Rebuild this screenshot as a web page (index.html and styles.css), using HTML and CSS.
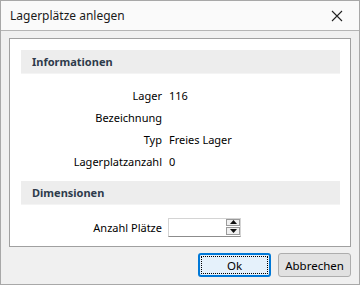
FILE: index.html
```html
<!DOCTYPE html>
<html lang="de">
<head>
    <meta charset="UTF-8">
    <meta name="viewport" content="width=device-width, initial-scale=1.0">
    <title>Lagerplätze anlegen</title>
    <link rel="stylesheet" href="styles.css">
</head>
<body>
    <div class="window">
        <div class="titlebar">
            <span class="title">Lagerplätze anlegen</span>
            <svg class="close" width="12" height="12" viewBox="0 0 12 12">
                <path d="M1 1 L11 11 M11 1 L1 11" stroke="#222" stroke-width="1.1" fill="none"/>
            </svg>
        </div>
        <div class="content">
            <div class="panel">
                <div class="section-head">Informationen</div>
                <div class="rows">
                    <div class="row"><span class="label">Lager</span><span class="value">116</span></div>
                    <div class="row"><span class="label">Bezeichnung</span><span class="value"></span></div>
                    <div class="row"><span class="label">Typ</span><span class="value">Freies Lager</span></div>
                    <div class="row"><span class="label">Lagerplatzanzahl</span><span class="value">0</span></div>
                </div>
                <div class="section-head">Dimensionen</div>
                <div class="row input-row">
                    <span class="label">Anzahl Plätze</span>
                    <div class="spin">
                        <input type="text" class="spin-input">
                        <div class="spin-buttons">
                            <div class="spin-btn"><svg width="7" height="4" viewBox="0 0 7 4"><path d="M0 4 L3.5 0 L7 4 Z" fill="#111"/></svg></div>
                            <div class="spin-btn"><svg width="7" height="4" viewBox="0 0 7 4"><path d="M0 0 L7 0 L3.5 4 Z" fill="#111"/></svg></div>
                        </div>
                    </div>
                </div>
            </div>
            <div class="buttons">
                <button class="btn btn-default"><span class="focus">Ok</span></button>
                <button class="btn">Abbrechen</button>
            </div>
        </div>
    </div>
</body>
</html>
```

FILE: styles.css
```css
body {
    margin: 0;
    font-family: "Noto Sans", sans-serif;
    font-size: 11px;
    color: #000;
}
.window {
    width: 360px;
    height: 285px;
    box-sizing: border-box;
    border: 1px solid #a8a8a8;
    background: #f0f0f0;
    display: flex;
    flex-direction: column;
}
.titlebar {
    height: 29px;
    background: #fafafa;
    border-bottom: 1px solid #b4b4b4;
    display: flex;
    align-items: center;
    justify-content: space-between;
    padding: 0 16px 0 9px;
    flex-shrink: 0;
}
.title {
    font-size: 12px;
    color: #1a1a1a;
}
.close {
    display: block;
}
.content {
    padding: 7px 8px 0 8px;
}
.panel {
    background: #fff;
    border: 1px solid #a0a0a0;
    height: 209px;
    box-sizing: border-box;
    padding: 11px 10px 0 11px;
}
.section-head {
    height: 24px;
    background: #ededed;
    border-bottom: 1px solid #f4f4f4;
    box-sizing: border-box;
    padding-left: 11px;
    font-weight: bold;
    color: #2e3b4b;
    line-height: 23px;
}
.rows {
    padding: 10px 0 9px 0;
}
.row {
    display: flex;
    align-items: center;
    height: 22px;
}
.label {
    width: 141px;
    text-align: right;
    flex-shrink: 0;
}
.value {
    padding-left: 7px;
}
.input-row {
    margin-top: 11px;
}
.spin {
    margin-left: 6px;
    width: 73px;
    height: 19px;
    box-sizing: border-box;
    border: 1px solid #d4d4d4;
    border-bottom-color: #8c8c8c;
    display: flex;
    background: #fff;
}
.spin-input {
    border: none;
    flex: 1;
    width: 0;
    padding: 0;
    outline: none;
}
.spin-buttons {
    width: 14px;
    display: flex;
    flex-direction: column;
}
.spin-btn {
    flex: 1;
    border: 1px solid #9a9a9a;
    background: #f0f0f0;
    display: flex;
    align-items: center;
    justify-content: center;
    margin-bottom: 1px;
}
.buttons {
    display: flex;
    justify-content: flex-end;
    gap: 7px;
    padding-top: 6px;
}
.btn {
    width: 73px;
    height: 24px;
    font-family: inherit;
    font-size: 11.5px;
    background: #e1e1e1;
    border: 1px solid #adadad;
    border-radius: 3px;
    padding: 0;
    color: #000;
}
.btn-default {
    border: 2px solid #0078d7;
    background: #e5f1fb;
    padding: 1px;
}
.focus {
    display: flex;
    align-items: center;
    justify-content: center;
    height: 100%;
    box-sizing: border-box;
    border: 1px dotted #000;
}
```
